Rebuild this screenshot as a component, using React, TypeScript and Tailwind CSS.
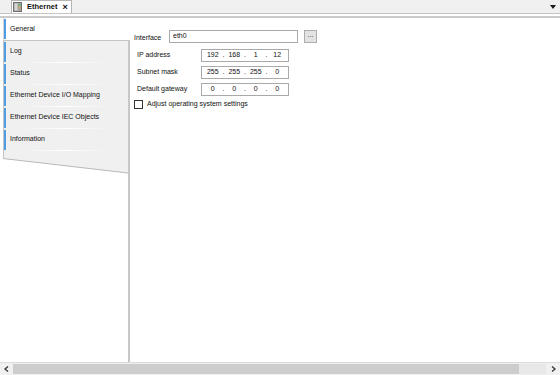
import React from "react";

const font = "font-['Liberation_Sans',Arial,sans-serif]";

const tabs = [
  "Log",
  "Status",
  "Ethernet Device I/O Mapping",
  "Ethernet Device IEC Objects",
  "Information",
];

function DeviceIcon() {
  return (
    <svg width="9" height="10" viewBox="0 0 9 10">
      <rect x="0.5" y="0.5" width="8" height="9" fill="#a4a4a4" stroke="#6e6e6e" />
      <rect x="1.5" y="1.5" width="3" height="7" fill="#d6d6d6" />
      <rect x="5.5" y="2" width="2" height="1.5" fill="#5cb85c" />
      <rect x="5.5" y="5" width="2" height="1.5" fill="#d9a441" />
    </svg>
  );
}

function SideTab({ label }: { label: string }) {
  return (
    <div className="flex h-[22px]">
      <div className="my-[1px] w-[2px] bg-[#4f9de4]" />
      <div className="flex flex-1 flex-col">
        <div className="flex flex-1 items-center pl-[4px]">{label}</div>
        <div className="ml-[14px] mr-[16px] h-px bg-gradient-to-r from-transparent via-white to-transparent" />
      </div>
    </div>
  );
}

function IpBox({ parts }: { parts: string[] }) {
  return (
    <div className="flex h-[13px] w-[88px] items-center border border-[#a9a9a9] bg-white px-[2px]">
      {parts.map((p, i) => (
        <React.Fragment key={i}>
          <span className="w-[18px] text-center">{p}</span>
          {i < 3 && <span className="w-[4px] text-center">.</span>}
        </React.Fragment>
      ))}
    </div>
  );
}

function FieldRow({ label, parts }: { label: string; parts: string[] }) {
  return (
    <div className="flex h-[17px] items-center">
      <span className="w-[67px] pl-[3px]">{label}</span>
      <IpBox parts={parts} />
    </div>
  );
}

export default function App() {
  return (
    <div className={`${font} flex h-[375px] w-[560px] flex-col overflow-hidden bg-white text-[7px] text-[#111]`}>
      {/* Editor tab strip */}
      <div className="flex h-[14px] items-end border-b border-[#c4c4c4] bg-[#f0f0f0] pl-[11px]">
        <div className="flex h-[13px] w-[61px] items-center gap-[5px] border border-b-0 border-[#b5b5b5] bg-white pl-[1px]">
          <DeviceIcon />
          <span className="text-[7.5px] font-bold">Ethernet</span>
          <span className="text-[9px] font-bold leading-none">×</span>
        </div>
        <div className="ml-auto mr-[4px] self-center">
          <svg width="6" height="4" viewBox="0 0 6 4">
            <path d="M0 0h6L3 4z" fill="#1a1a1a" />
          </svg>
        </div>
      </div>
      <div className="h-[2px]" />
      <div className="h-[2px] bg-[#cbcbcb]" />

      {/* Body */}
      <div className="flex flex-1">
        {/* Left side tabs */}
        <div className="flex w-[130px] flex-col pl-[3px]">
          <div className="flex h-[22px] border-l border-[#d4d4d4]">
            <div className="my-[1px] w-[2px] bg-[#4f9de4]" />
            <div className="flex items-center pl-[4px]">General</div>
          </div>
          <div className="flex flex-1 flex-col border-r-2 border-[#c8c8c8]">
            <div className="border-l border-t border-[#c4c4c4] bg-[#f0f0f0]">
              {tabs.map((t) => (
                <SideTab key={t} label={t} />
              ))}
              <div className="h-[7px]" />
            </div>
            <svg width="125" height="16" viewBox="0 0 125 16" className="block">
              <polygon points="0,0 125,0 125,15 0,0.5" fill="#f0f0f0" />
              <line x1="0" y1="0.5" x2="125" y2="15" stroke="#b8b8b8" strokeWidth="1" />
            </svg>
          </div>
        </div>

        {/* Settings */}
        <div className="flex flex-1 flex-col pl-[4px] pt-[12px]">
          <div className="flex h-[17px] items-start">
            <span className="w-[35px] pt-[3px]">Interface</span>
            <div className="flex h-[13px] w-[129px] items-center border border-[#a9a9a9] bg-white pl-[3px]">eth0</div>
            <div className="ml-[6px] flex h-[13px] w-[13px] items-start justify-center border border-[#adadad] bg-[#e3e3e3] leading-[7px]">
              ...
            </div>
          </div>
          <FieldRow label="IP address" parts={["192", "168", "1", "12"]} />
          <FieldRow label="Subnet mask" parts={["255", "255", "255", "0"]} />
          <FieldRow label="Default gateway" parts={["0", "0", "0", "0"]} />
          <div className="mt-[1px] flex items-center gap-[4px]">
            <div className="h-[9px] w-[9px] border border-[#333] bg-white" />
            <span>Adjust operating system settings</span>
          </div>
        </div>
      </div>

      {/* Horizontal scrollbar */}
      <div className="flex h-[13px] items-stretch border-t border-[#dcdcdc] bg-[#f0f0f0]">
        <div className="flex w-[13px] items-center justify-center">
          <svg width="5" height="6" viewBox="0 0 5 6">
            <path d="M4 0.5L1 3l3 2.5" fill="none" stroke="#333" strokeWidth="1.3" />
          </svg>
        </div>
        <div className="my-[1px] w-[506px] bg-[#cdcdcd]" />
        <div className="my-[1px] w-[27px] bg-[#e8e8e8]" />
        <div className="flex flex-1 items-center justify-center">
          <svg width="5" height="6" viewBox="0 0 5 6">
            <path d="M1 0.5L4 3l-3 2.5" fill="none" stroke="#333" strokeWidth="1.3" />
          </svg>
        </div>
      </div>
    </div>
  );
}
